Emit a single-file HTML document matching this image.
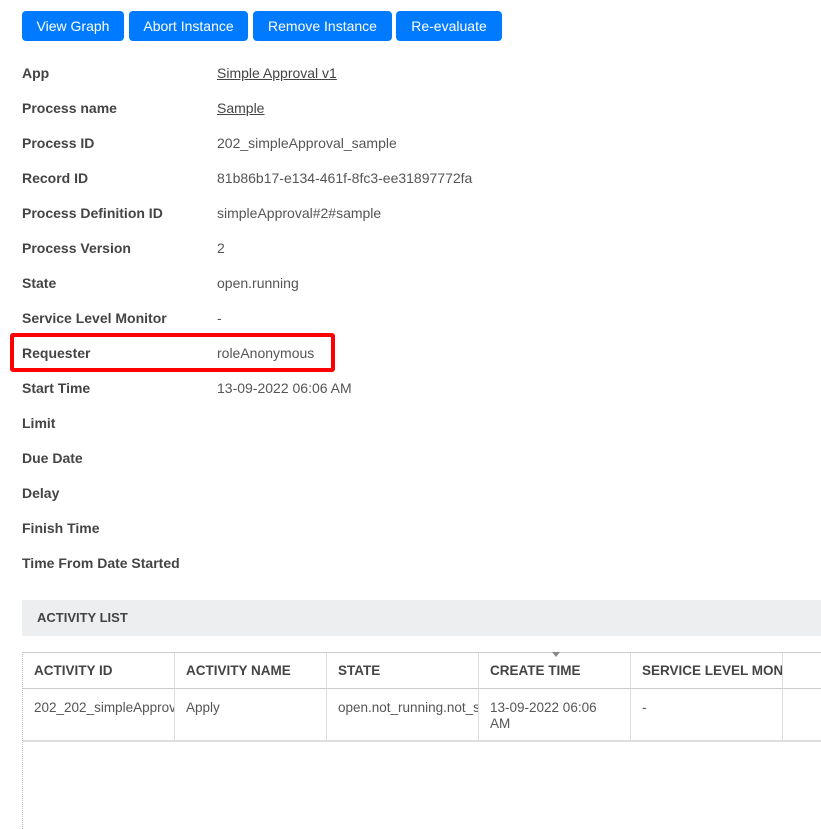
<!DOCTYPE html>
<html><head><style>
body{margin:0;width:821px;height:828px;overflow:hidden;background:#fff;font-family:"Liberation Sans",Arial,sans-serif;font-size:14px;color:#555;position:relative}
.btn{position:absolute;top:11px;height:30px;background:#007bff;color:#fff;border-radius:4px;line-height:30px;text-align:center;font-size:14px}
.l{position:absolute;left:22px;font-weight:bold;color:#444;}
.v{position:absolute;left:217px;color:#555}
.u{text-decoration:underline;color:#444}
.box{position:absolute;left:10px;top:333px;width:317px;height:31px;border:4px solid #f00;border-radius:3px}
.bar{position:absolute;left:22px;top:600px;width:799px;height:36px;background:#eceeef}
.bar span{position:absolute;left:15px;top:10px;font-weight:bold;font-size:13px;color:#444}
.tbl{position:absolute;left:22px;top:652px;width:799px;height:176px;border-top:1px solid #ccc;border-left:1px dotted #bbb}
.th,.td{position:absolute;border-right:1px solid #ddd;box-sizing:border-box;padding-left:11px;overflow:hidden;white-space:nowrap}
.th{top:0;height:36px;line-height:36px;font-weight:bold;font-size:13.5px;color:#444;border-bottom:1px solid #ccc}
.td{top:36px;height:53px;padding-top:11px;line-height:16px;border-bottom:2px solid #ddd;font-size:13.5px}
</style></head><body>
<div class="btn" style="left:22px;width:102px">View Graph</div>
<div class="btn" style="left:129px;width:119px">Abort Instance</div>
<div class="btn" style="left:253px;width:139px">Remove Instance</div>
<div class="btn" style="left:396px;width:106px">Re-evaluate</div>

<div class="l" style="top:65px">App</div><div class="v u" style="top:65px">Simple Approval v1</div>
<div class="l" style="top:100px">Process name</div><div class="v u" style="top:100px">Sample</div>
<div class="l" style="top:135px">Process ID</div><div class="v" style="top:135px">202_simpleApproval_sample</div>
<div class="l" style="top:170px">Record ID</div><div class="v" style="top:170px">81b86b17-e134-461f-8fc3-ee31897772fa</div>
<div class="l" style="top:205px">Process Definition ID</div><div class="v" style="top:205px">simpleApproval#2#sample</div>
<div class="l" style="top:240px">Process Version</div><div class="v" style="top:240px">2</div>
<div class="l" style="top:275px">State</div><div class="v" style="top:275px">open.running</div>
<div class="l" style="top:310px">Service Level Monitor</div><div class="v" style="top:310px">-</div>
<div class="l" style="top:345px">Requester</div><div class="v" style="top:345px">roleAnonymous</div>
<div class="box"></div>
<div class="l" style="top:380px">Start Time</div><div class="v" style="top:380px">13-09-2022 06:06 AM</div>
<div class="l" style="top:415px">Limit</div>
<div class="l" style="top:450px">Due Date</div>
<div class="l" style="top:485px">Delay</div>
<div class="l" style="top:520px">Finish Time</div>
<div class="l" style="top:555px">Time From Date Started</div>

<div class="bar"><span>ACTIVITY LIST</span></div>
<div class="tbl">
<div class="th" style="left:0;width:152px">ACTIVITY ID</div>
<div class="th" style="left:152px;width:152px">ACTIVITY NAME</div>
<div class="th" style="left:304px;width:152px">STATE</div>
<div class="th" style="left:456px;width:152px">CREATE TIME</div>
<div class="th" style="left:608px;width:152px">SERVICE LEVEL MONITOR</div>
<div class="th" style="left:760px;width:39px;border-right:none"></div>
<div class="td" style="left:0;width:152px">202_202_simpleApproval</div>
<div class="td" style="left:152px;width:152px">Apply</div>
<div class="td" style="left:304px;width:152px">open.not_running.not_started</div>
<div class="td" style="left:456px;width:152px;white-space:normal">13-09-2022 06:06<br>AM</div>
<div class="td" style="left:608px;width:152px">-</div>
<div class="td" style="left:760px;width:39px;border-right:none"></div>
<div style="position:absolute;left:529px;top:-1px;width:0;height:0;border-left:4px solid transparent;border-right:4px solid transparent;border-top:5px solid #888"></div>
</div>
</body></html>
